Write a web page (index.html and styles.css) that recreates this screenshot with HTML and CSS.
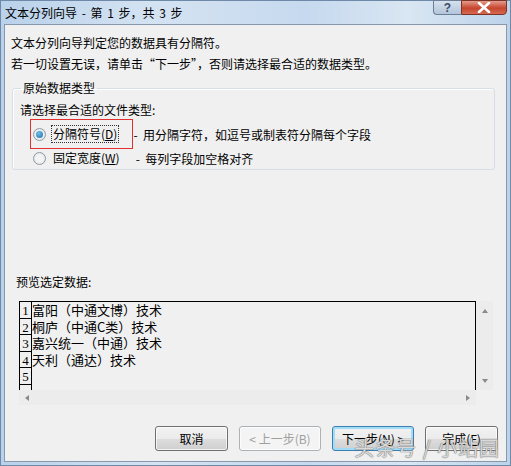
FILE: index.html
```html
<!DOCTYPE html>
<html lang="zh-CN">
<head>
    <meta charset="UTF-8">
    <title>文本分列向导</title>
    <link rel="stylesheet" href="styles.css">
</head>
<body>
<div class="window">
    <div class="titlebar">
        <span class="title">文本分列向导 - 第 1 步，共 3 步</span>
        <div class="caption-buttons">
            <div class="cap-btn help">?</div>
            <div class="cap-btn close">
                <svg width="14" height="11" viewBox="0 0 14 11"><path d="M2 1 L12 10 M12 1 L2 10" stroke="#fff" stroke-width="2.6" stroke-linecap="round"/></svg>
            </div>
        </div>
    </div>
    <div class="client">
        <p class="line">文本分列向导判定您的数据具有分隔符。</p>
        <p class="line">若一切设置无误，请单击“下一步”，否则请选择最合适的数据类型。</p>

        <fieldset class="group">
            <legend>原始数据类型</legend>
            <div class="prompt">请选择最合适的文件类型:</div>
            <div class="option">
                <div class="highlight">
                    <span class="radio checked"></span>
                    <span class="opt-label focused">分隔符号(<u>D</u>)</span>
                </div>
                <span class="opt-desc">-&nbsp; 用分隔字符，如逗号或制表符分隔每个字段</span>
            </div>
            <div class="option">
                <div class="plain">
                    <span class="radio"></span>
                    <span class="opt-label">固定宽度(<u>W</u>)</span>
                </div>
                <span class="opt-desc">-&nbsp; 每列字段加空格对齐</span>
            </div>
        </fieldset>

        <div class="preview-label">预览选定数据:</div>
        <div class="preview">
            <div class="preview-main">
                <div class="data">
                    <div class="row"><span class="num">1</span><span class="cell">富阳（中通文博）技术</span></div>
                    <div class="row"><span class="num">2</span><span class="cell">桐庐（中通C类）技术</span></div>
                    <div class="row"><span class="num">3</span><span class="cell">嘉兴统一（中通）技术</span></div>
                    <div class="row"><span class="num">4</span><span class="cell">天利（通达）技术</span></div>
                    <div class="row"><span class="num">5</span><span class="cell"></span></div>
                    <div class="row"><span class="num"></span><span class="cell"></span></div>
                </div>
                <div class="vscroll">
                    <span class="arrow up"></span>
                    <span class="arrow down"></span>
                </div>
            </div>
            <div class="hscroll">
                <span class="arrow left"></span>
                <span class="arrow right"></span>
            </div>
        </div>

        <div class="buttons">
            <button class="btn">取消</button>
            <button class="btn disabled">&lt; 上一步(B)</button>
            <button class="btn default">下一步(<u>N</u>) &gt;</button>
            <button class="btn">完成(<u>F</u>)</button>
        </div>
        <div class="watermark">头条号 / 小站园</div>
    </div>
</div>
</body>
</html>
```

FILE: styles.css
```css
* {
    box-sizing: border-box;
}
body {
    margin: 0;
    width: 511px;
    height: 466px;
    overflow: hidden;
    font-family: "Noto Sans CJK SC", "Liberation Sans", sans-serif;
    font-size: 12px;
    color: #000;
}
.window {
    width: 511px;
    height: 466px;
    background: linear-gradient(90deg, #b9d1ea 0%, #d4e3f2 30%, #c6d9ee 60%, #d9e6f3 80%, #bcd3ea 100%);
    border: 1px solid #6e8aa8;
    display: flex;
    flex-direction: column;
    padding: 0 3px 3px 3px;
}
.titlebar {
    height: 23px;
    display: flex;
    align-items: flex-start;
    justify-content: space-between;
}
.title {
    padding: 4px 0 0 1px;
    font-size: 12px;
    line-height: 16px;
    word-spacing: 2px;
}
.caption-buttons {
    display: flex;
    margin-top: -1px;
}
.cap-btn {
    height: 15px;
    display: flex;
    align-items: center;
    justify-content: center;
    border: 1px solid #6d7f96;
}
.help {
    width: 28px;
    border-radius: 0 0 0 4px;
    background: linear-gradient(#d5e1ee, #b3c5da);
    color: #3a4d66;
    font-family: "Liberation Sans", sans-serif;
    font-weight: bold;
    font-size: 12px;
    border-right: none;
}
.close {
    width: 46px;
    border-radius: 0 0 4px 0;
    background: linear-gradient(#e39c8d, #c7442e 55%, #d46a52);
    border-color: #7d3226;
}
.client {
    flex: 1;
    position: relative;
    background: #f0f0f0;
    border: 1px solid #8798ac;
    padding: 10px 6px 0 6px;
    display: flex;
    flex-direction: column;
}
.line {
    margin: 0 0 5px 0;
    line-height: 16px;
}
.group {
    margin: 3px 5px 0 1px;
    padding: 4px 8px 4px 7px;
    border: 1px solid #d5dfe5;
    border-radius: 3px;
    box-shadow: inset 1px 1px 0 #fff;
    height: 90px;
}
.group legend {
    padding: 0 2px;
    margin-left: 1px;
    line-height: 16px;
}
.prompt {
    line-height: 16px;
    margin: 2px 0 4px 0;
}
.option {
    display: flex;
    align-items: center;
    height: 24px;
}
.highlight, .plain {
    display: flex;
    align-items: center;
    height: 30px;
    padding: 0 14px 0 2px;
    margin-left: 10px;
    border: 1px solid transparent;
}
.highlight {
    border-color: #e0312f;
    position: relative;
    z-index: 1;
}
.radio {
    width: 13px;
    height: 13px;
    border-radius: 50%;
    border: 1px solid #8f9aa6;
    background: radial-gradient(circle, #f4f4f4 40%, #dcdcdc 100%);
    margin-right: 6px;
    position: relative;
}
.radio.checked::after {
    content: "";
    position: absolute;
    left: 2px;
    top: 2px;
    width: 7px;
    height: 7px;
    border-radius: 50%;
    background: radial-gradient(circle at 40% 35%, #6fc0ea, #1c6ea8);
}
.opt-label {
    line-height: 16px;
    padding: 0 1px;
}
.opt-label.focused {
    outline: 1px dotted #333;
}
.opt-desc {
    margin-left: 0;
}
.preview-label {
    margin: 104px 0 0 5px;
    line-height: 16px;
}
.preview {
    margin: 11px 7px 0 8px;
    display: flex;
    flex-direction: column;
}
.preview-main {
    display: flex;
    height: 89px;
}
.data {
    flex: 1;
    border: 1px solid #000;
    border-bottom: none;
    overflow: hidden;
    background: #f0f0f0;
}
.row {
    display: flex;
    height: 16.5px;
    line-height: 16px;
}
.num {
    width: 12px;
    border-right: 1px solid #000;
    border-bottom: 1px solid #000;
    text-align: center;
    font-family: "Liberation Serif", serif;
    font-size: 13px;
    line-height: 18px;
}
.cell {
    flex: 1;
    font-size: 13px;
    white-space: pre;
}
.vscroll {
    width: 17px;
    background: #ececec;
    display: flex;
    flex-direction: column;
    justify-content: space-between;
    align-items: center;
    padding: 8px 0 7px;
}
.hscroll {
    height: 15px;
    margin-right: 17px;
    background: #ececec;
    display: flex;
    justify-content: space-between;
    align-items: center;
    padding: 0 6px 0 6px;
}
.arrow {
    width: 0;
    height: 0;
    border: 3px solid transparent;
}
.arrow.up {
    border-bottom: 4px solid #8a8a8a;
    border-top: none;
}
.arrow.down {
    border-top: 4px solid #8a8a8a;
    border-bottom: none;
}
.arrow.left {
    border-right: 4px solid #8a8a8a;
    border-left: none;
}
.arrow.right {
    border-left: 4px solid #8a8a8a;
    border-right: none;
}
.buttons {
    display: flex;
    justify-content: flex-end;
    gap: 11px;
    margin: 21px 2px 0 0;
}
.btn {
    width: 73px;
    height: 25px;
    padding: 0;
    font-family: inherit;
    font-size: 12px;
    color: #000;
    border: 1px solid #707070;
    border-radius: 3px;
    background: linear-gradient(#f2f2f2 0%, #ebebeb 50%, #dddddd 51%, #cfcfcf 100%);
    box-shadow: inset 0 0 0 1px rgba(255, 255, 255, 0.7);
}
.btn:nth-child(2), .btn:nth-child(3) {
    width: 82px;
}
.btn.disabled {
    color: #a0a0a0;
    border-color: #adb2b5;
    background: #f4f4f4;
}
.btn.default {
    border-color: #3c7fb1;
    box-shadow: inset 0 0 0 2px #a2dcf7;
}
.watermark {
    position: absolute;
    right: 6px;
    bottom: 0;
    font-size: 20px;
    line-height: 26px;
    color: rgba(255, 255, 255, 0.75);
    text-shadow: 0 0 1px #666, 0 0 1px #666;
    letter-spacing: 1px;
}
```
